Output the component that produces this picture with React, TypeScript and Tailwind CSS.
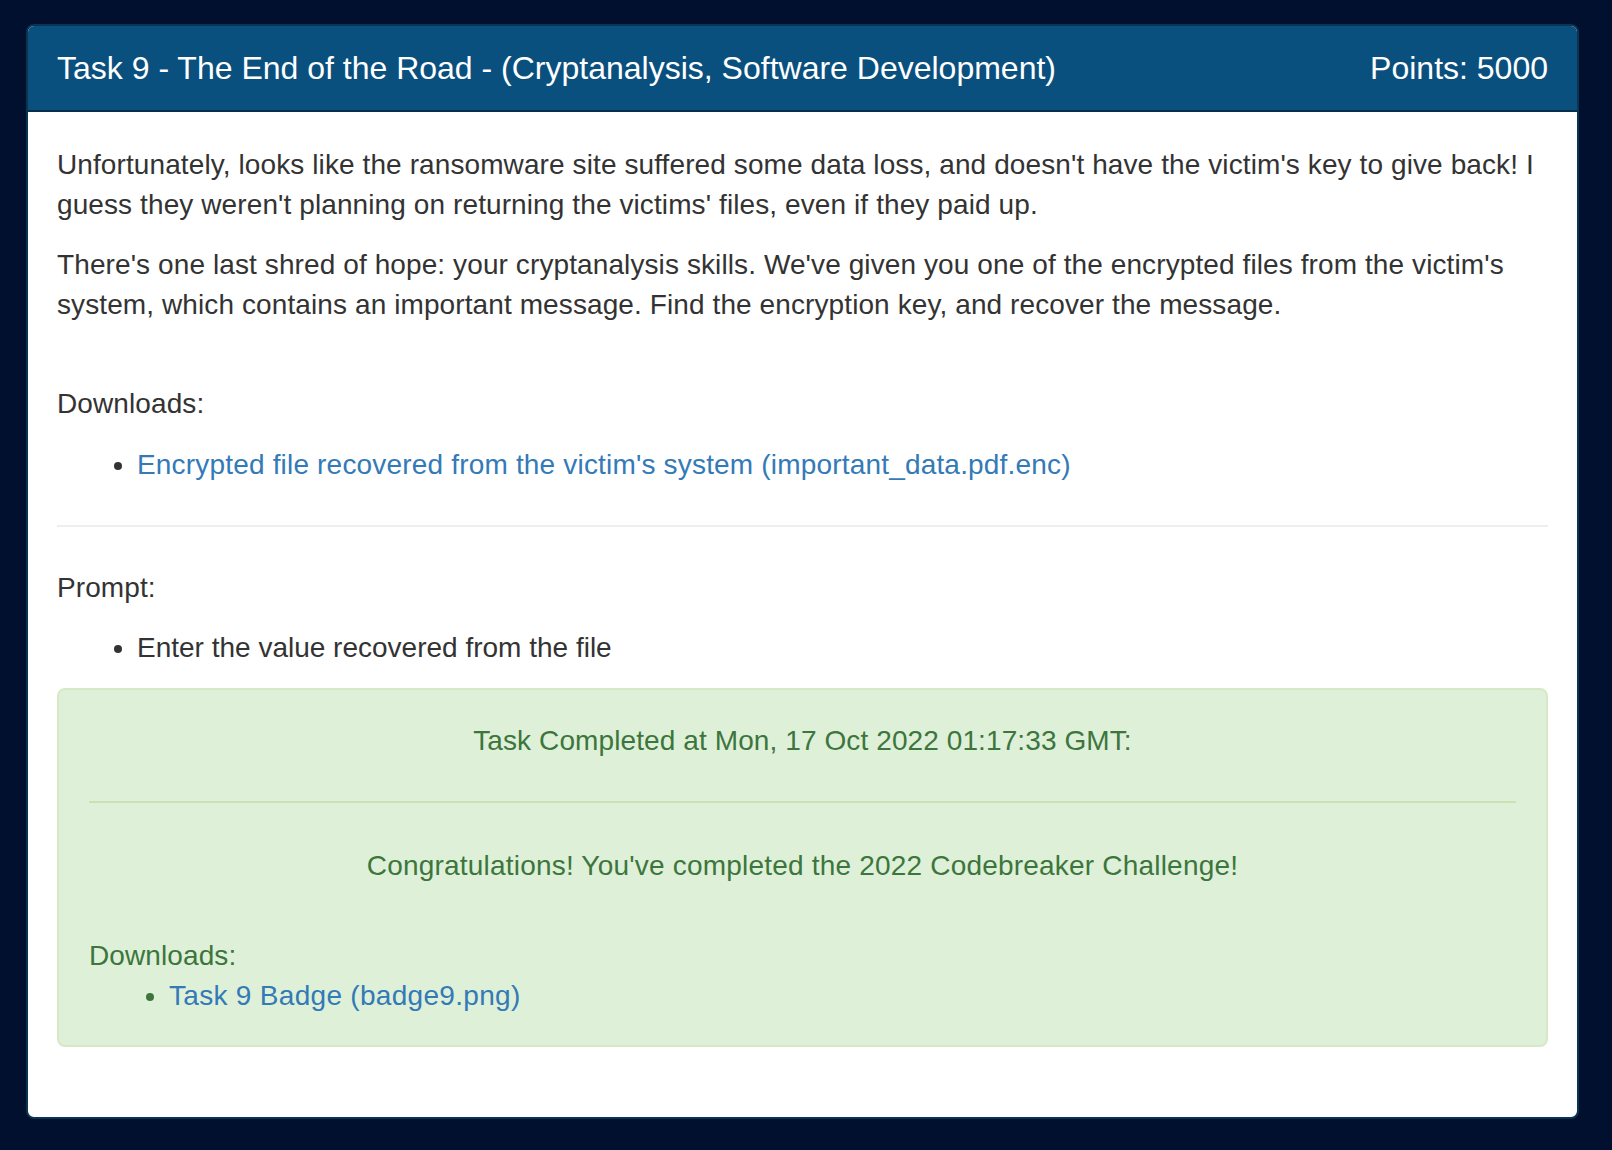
import React from 'react';

const App: React.FC = () => {
    return (
        <div className="min-h-[1150px] bg-[#00102e] pt-[24px] pl-[26px] pr-[33px] pb-[35px] font-['Liberation_Sans',Arial,sans-serif] text-[28px] leading-[40px] text-[#333333]">
            <div className="rounded-[8px] border-2 border-[#0a3550] bg-white overflow-hidden">
                <div className="flex items-center justify-between bg-[#0a507e] border-b-2 border-[#06304a] px-[29px] py-[20px] text-white">
                    <h3 className="text-[32px] leading-[44px]">Task 9 - The End of the Road - (Cryptanalysis, Software Development)</h3>
                    <span className="text-[32px] leading-[44px]">Points: 5000</span>
                </div>

                <div className="px-[29px] pt-[33px] pb-[30px] tracking-[0.1px]">
                    <p>
                        Unfortunately, looks like the ransomware site suffered some data loss, and doesn't have the victim's key to give back! I guess they weren't planning on returning the victims' files, even if they paid up.
                    </p>
                    <p className="mt-[20px]">
                        There's one last shred of hope: your cryptanalysis skills. We've given you one of the encrypted files from the victim's system, which contains an important message. Find the encryption key, and recover the message.
                    </p>

                    <p className="mt-[59px]">Downloads:</p>
                    <ul className="mt-[21px] list-disc pl-[80px]">
                        <li>
                            <a href="#" className="text-[#337ab7] tracking-[0.18px]">Encrypted file recovered from the victim's system (important_data.pdf.enc)</a>
                        </li>
                    </ul>

                    <hr className="mt-[40px] border-t-2 border-[#eeeeee]" />

                    <p className="mt-[41px]">Prompt:</p>
                    <ul className="mt-[20px] list-disc pl-[80px]">
                        <li className="tracking-normal">Enter the value recovered from the file</li>
                    </ul>

                    <div className="mt-[20px] mb-[40px] rounded-[8px] border-2 border-[#d6e9c6] bg-[#dff0d8] px-[30px] pt-[31px] pb-[29px] text-[#3c763d]">
                        <p className="text-center">Task Completed at Mon, 17 Oct 2022 01:17:33 GMT:</p>
                        <hr className="mt-[40px] mb-[43px] border-t-2 border-[#c9e2b3]" />
                        <p className="text-center tracking-[0.2px]">Congratulations! You've completed the 2022 Codebreaker Challenge!</p>
                        <p className="mt-[50px]">Downloads:</p>
                        <ul className="list-disc pl-[80px]">
                            <li>
                                <a href="#" className="text-[#337ab7] tracking-[0.3px]">Task 9 Badge (badge9.png)</a>
                            </li>
                        </ul>
                    </div>
                </div>
            </div>
        </div>
    );
};

export default App;
